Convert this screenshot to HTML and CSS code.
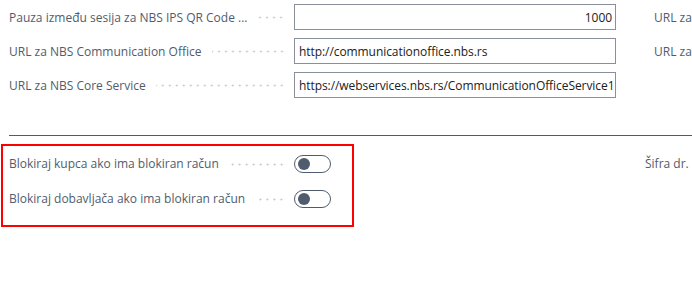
FILE: index.html
```html
<!DOCTYPE html>
<html>
<head>
  <meta charset="utf-8">
  <title>NBS postavke</title>
  <link rel="stylesheet" href="styles.css">
</head>
<body>

<!-- Opšte postavke -->
<div class="columns top">
  <div class="col">
    <div class="field">
      <label class="caption">Pauza između sesija za NBS IPS QR Code ...</label>
      <input class="box num" type="text" value="1000">
    </div>
    <div class="field">
      <label class="caption">URL za NBS Communication Office</label>
      <input class="box" type="text" value="http://communicationoffice.nbs.rs">
    </div>
    <div class="field">
      <label class="caption">URL za NBS Core Service</label>
      <input class="box" type="text" value="https://webservices.nbs.rs/CommunicationOfficeService1">
    </div>
  </div>
  <div class="col">
    <div class="field"><span class="caption plain">URL za NBS Exchange Rate Service</span></div>
    <div class="field"><span class="caption plain">URL za NBS Company Account Service</span></div>
  </div>
</div>

<hr class="divider">

<!-- Blokiranje -->
<div class="columns bottom">
  <div class="col">
    <div class="highlight">
      <div class="field toggle-row">
        <label class="caption">Blokiraj kupca ako ima blokiran račun</label>
        <span class="switch"><span class="knob"></span></span>
      </div>
      <div class="field toggle-row">
        <label class="caption">Blokiraj dobavljača ako ima blokiran račun</label>
        <span class="switch"><span class="knob"></span></span>
      </div>
    </div>
  </div>
  <div class="col side">
    <div class="field toggle-row"><span class="caption plain">Šifra dr. banke za blokadu</span></div>
  </div>
</div>

</body>
</html>
```

FILE: styles.css
```css
/* osnovno */
body {
  margin: 0;
  font-family: "Open Sans", "Noto Sans", sans-serif;
  font-size: 12px;
  color: #505c6d;
  background: #fff;
  overflow: hidden;
}

.columns {
  display: grid;
  grid-template-columns: 607px 1fr;
  column-gap: 38px;
  white-space: nowrap;
}

.col {
  min-width: 0;
  overflow: hidden;
}

.top {
  padding: 4px 0 0 9px;
}

.field {
  display: flex;
  align-items: center;
  height: 26px;
  margin-bottom: 8px;
}

/* natpis + tačkice do polja */
.caption {
  display: flex;
  align-items: center;
  width: 285px;
  flex-shrink: 0;
  overflow: hidden;
}

.caption::after {
  content: "";
  flex: 1;
  height: 3px;
  margin: 1px 9px 0 10px;
  background-image: radial-gradient(circle, #bfc4cc 0.9px, transparent 1.1px);
  background-size: 7px 3px;
  background-position: right center;
}

.caption.plain::after {
  display: none;
}

.box {
  width: 323px;
  height: 26px;
  box-sizing: border-box;
  border: 1px solid #8a8f99;
  border-radius: 0;
  padding: 0 2px 0 4px;
  font-family: inherit;
  font-size: 12px;
  letter-spacing: -0.07px;
  color: #212121;
  background: #fff;
}

.num {
  text-align: right;
  padding-right: 3px;
}

.divider {
  margin: 29px 0 0 9px;
  border: 0;
  border-top: 1px solid #505c6d;
}

.bottom {
  padding-top: 8px;
}

/* crveni okvir oko prekidača */
.highlight {
  width: 353px;
  box-sizing: border-box;
  margin-left: 1px;
  border: 2px solid #ff0000;
  padding: 4px 0 5px 6px;
}

.side {
  padding-top: 6px;
}

.toggle-row {
  height: 27px;
}

.switch {
  display: inline-flex;
  align-items: center;
  width: 37px;
  height: 18px;
  box-sizing: border-box;
  border: 1px solid #505c6d;
  border-radius: 10px;
  padding-left: 3px;
}

.knob {
  width: 12px;
  height: 12px;
  border-radius: 50%;
  background: #505c6d;
}
```
